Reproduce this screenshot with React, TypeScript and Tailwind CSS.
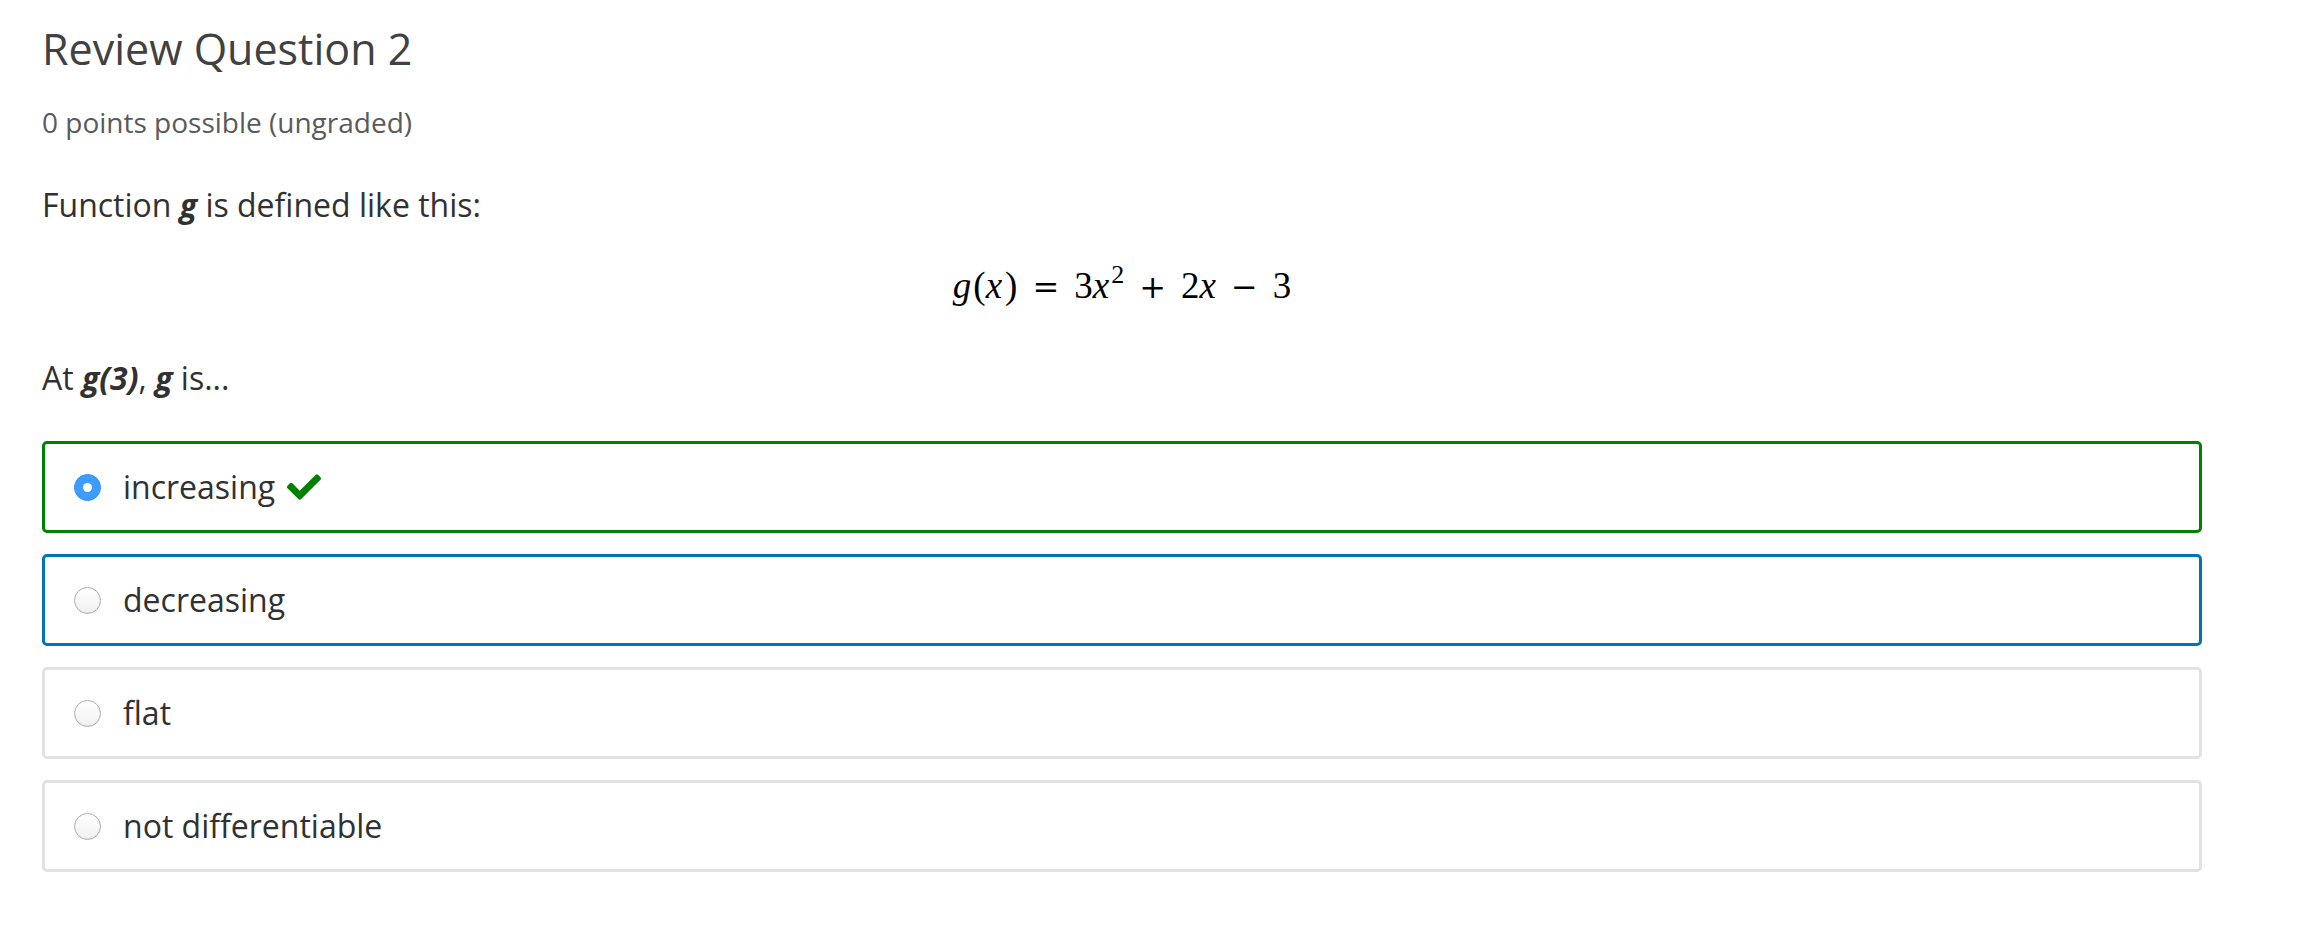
import React from "react";
import { FaCheck } from "react-icons/fa";

const sans = { fontFamily: '"Open Sans", "Noto Sans", sans-serif' };
const serif = { fontFamily: '"Liberation Serif", "DejaVu Serif", serif' };
const opFont = { fontFamily: '"DejaVu Serif", "Liberation Serif", serif' };

function Radio({ checked }: { checked?: boolean }) {
  if (checked) {
    return (
      <span className="flex h-[27px] w-[27px] shrink-0 items-center justify-center rounded-full border border-[#2f8ef5] bg-[#3d9bfc]">
        <span className="h-[9px] w-[9px] rounded-full bg-white" />
      </span>
    );
  }
  return (
    <span className="h-[27px] w-[27px] shrink-0 rounded-full border-[1.5px] border-[#aeaeae] bg-gradient-to-b from-white to-[#f1f1f1] shadow-[inset_0_-1px_1px_rgba(0,0,0,0.06)]" />
  );
}

function Option({
  label,
  tone,
  checked,
  correct,
}: {
  label: string;
  tone: "green" | "blue" | "gray";
  checked?: boolean;
  correct?: boolean;
}) {
  const border =
    tone === "green"
      ? "border-[#008100]"
      : tone === "blue"
      ? "border-[#0075b4]"
      : "border-[#e2e2e2]";
  return (
    <div
      className={`flex h-[92px] items-center rounded-[5px] border-[3px] bg-white pl-[29px] ${border}`}
    >
      <Radio checked={checked} />
      <span className="ml-[22px] text-[32px] leading-[32px] text-[#313131]" style={sans}>
        {label}
      </span>
      {correct && <FaCheck className="ml-[12px] text-[#008100]" size={34} />}
    </div>
  );
}

export default function App() {
  return (
    <div className="min-h-[944px] w-[2300px] bg-white pl-[42px] pr-[98px] pt-[27px]" style={sans}>
      <h2 className="text-[43px] leading-[44px] font-normal text-[#414141]">Review Question 2</h2>
      <div className="mt-[37px] text-[28px] leading-[28px] text-[#5a5a5a]">0 points possible (ungraded)</div>
      <p className="mt-[53px] text-[32px] leading-[32px] text-[#313131]">
        Function <b className="italic font-bold">g</b> is defined like this:
      </p>
      <div className="mt-[47px] flex h-[36px] items-baseline justify-center text-[37px] leading-[36px] text-black" style={serif}>
        <span className="italic">g</span>
        <span className="pl-[2px]">(</span>
        <span className="italic pr-[3px]">x</span>
        <span>)</span>
        <span className="px-[15px] text-[32px]" style={opFont}>=</span>
        <span>3</span>
        <span className="italic">x</span>
        <span className="relative -top-[15px] pl-[2px] text-[26px] leading-[26px]">2</span>
        <span className="px-[15px] text-[32px]" style={opFont}>+</span>
        <span>2</span>
        <span className="italic">x</span>
        <span className="px-[15px] text-[32px]" style={opFont}>−</span>
        <span>3</span>
      </div>
      <p className="mt-[58px] text-[32px] leading-[32px] text-[#313131]">
        At <b className="italic font-bold">g(3)</b>, <b className="italic font-bold">g</b> is...
      </p>
      <div className="mt-[47px] flex flex-col gap-[21px]">
        <Option label="increasing" tone="green" checked correct />
        <Option label="decreasing" tone="blue" />
        <Option label="flat" tone="gray" />
        <Option label="not differentiable" tone="gray" />
      </div>
    </div>
  );
}
